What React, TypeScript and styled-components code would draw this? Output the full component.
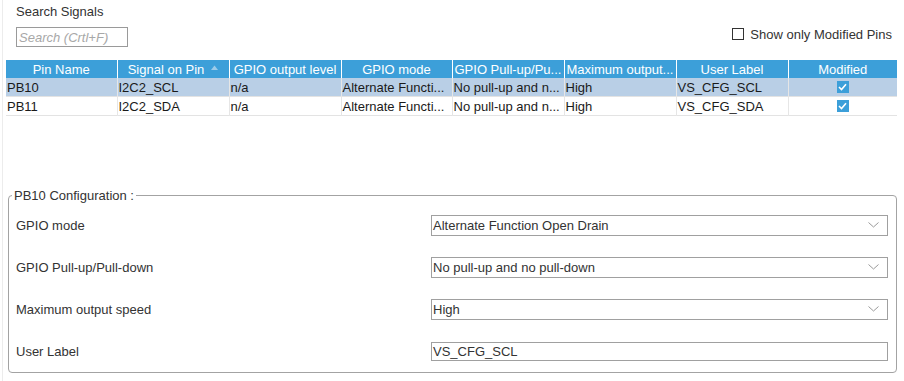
import React, { FunctionComponent } from "react";
import styled, { createGlobalStyle } from "styled-components";

// DATA //
const columns = [
    { title: "Pin Name", width: 111, align: "center" },
    { title: "Signal on Pin", width: 112, align: "center", sort: true },
    { title: "GPIO output level", width: 112, align: "center" },
    { title: "GPIO mode", width: 111, align: "center" },
    { title: "GPIO Pull-up/Pu...", width: 112, align: "left" },
    { title: "Maximum output...", width: 112, align: "left" },
    { title: "User Label", width: 112, align: "center" },
    { title: "Modified", width: 109, align: "center" },
];

const pins = [
    { pin: "PB10", signal: "I2C2_SCL", level: "n/a", mode: "Alternate Functi...", pull: "No pull-up and n...", speed: "High", label: "VS_CFG_SCL", selected: true },
    { pin: "PB11", signal: "I2C2_SDA", level: "n/a", mode: "Alternate Functi...", pull: "No pull-up and n...", speed: "High", label: "VS_CFG_SDA", selected: false },
];

const config = [
    { label: "GPIO mode", value: "Alternate Function Open Drain", select: true },
    { label: "GPIO Pull-up/Pull-down", value: "No pull-up and no pull-down", select: true },
    { label: "Maximum output speed", value: "High", select: true },
    { label: "User Label", value: "VS_CFG_SCL", select: false },
];

// ICONS //
const Chevron = () => (
    <svg width="11" height="6" viewBox="0 0 11 6">
        <path d="M0.5 0.5 L5.5 5 L10.5 0.5" fill="none" stroke="#9a9a9a" strokeWidth="1" />
    </svg>
);

const Tick = () => (
    <svg width="9" height="8" viewBox="0 0 9 8">
        <path d="M1 4 L3.5 6.5 L8 1.2" fill="none" stroke="#fff" strokeWidth="1.6" />
    </svg>
);

const SortUp = () => (
    <svg width="7" height="5" viewBox="0 0 7 5">
        <path d="M0 5 L3.5 0.5 L7 5 Z" fill="#9ccbe9" />
    </svg>
);

const App: FunctionComponent = () => {
    return (
        <Page>
            <GlobalStyle />
            <TopBar>
                <SearchGroup>
                    <Title>Search Signals</Title>
                    <SearchInput placeholder="Search (Crtl+F)" />
                </SearchGroup>
                <FilterToggle>
                    <PlainBox />
                    Show only Modified Pins
                </FilterToggle>
            </TopBar>

            <PinTable>
                <colgroup>
                    {columns.map((c) => (
                        <col key={c.title} style={{ width: c.width }} />
                    ))}
                </colgroup>
                <thead>
                    <tr>
                        {columns.map((c) => (
                            <HeadCell key={c.title} $align={c.align}>
                                {c.title}
                                {c.sort && (
                                    <SortMark>
                                        <SortUp />
                                    </SortMark>
                                )}
                            </HeadCell>
                        ))}
                    </tr>
                </thead>
                <tbody>
                    {pins.map((p) => (
                        <BodyRow key={p.pin} $selected={p.selected}>
                            <Cell>{p.pin}</Cell>
                            <Cell>{p.signal}</Cell>
                            <Cell>{p.level}</Cell>
                            <Cell>{p.mode}</Cell>
                            <Cell>{p.pull}</Cell>
                            <Cell>{p.speed}</Cell>
                            <Cell>{p.label}</Cell>
                            <CheckCell>
                                <BlueBox>
                                    <Tick />
                                </BlueBox>
                            </CheckCell>
                        </BodyRow>
                    ))}
                </tbody>
            </PinTable>

            <ConfigBox>
                <Legend>PB10 Configuration :</Legend>
                {config.map((c) => (
                    <ConfigRow key={c.label}>
                        <ConfigLabel>{c.label}</ConfigLabel>
                        {c.select ? (
                            <SelectBox>
                                <span>{c.value}</span>
                                <Chevron />
                            </SelectBox>
                        ) : (
                            <TextBox>{c.value}</TextBox>
                        )}
                    </ConfigRow>
                ))}
            </ConfigBox>
        </Page>
    );
};

// STYLED COMPONENTS //
const GlobalStyle = createGlobalStyle`
    html, body {
        margin: 0;
        padding: 0;
        background: #ffffff;
    }
    body {
        font-family: "Liberation Sans", Arial, sans-serif;
        font-size: 13px;
        color: #333333;
    }
`;

const Page = styled.div`
    width: 902px;
    height: 381px;
    box-sizing: border-box;
    margin-left: 2px;
    padding: 0 0 0 3px;
    border-left: 1px solid #ececec;
`;

const TopBar = styled.div`
    width: 891px;
    height: 60px;
    display: flex;
    justify-content: space-between;
    align-items: flex-start;
`;

const SearchGroup = styled.div`
    display: flex;
    flex-direction: column;
    padding: 4px 0 0 10px;
`;

const Title = styled.div`
    height: 15px;
    line-height: 15px;
    color: #333;
`;

const SearchInput = styled.input`
    margin-top: 8px;
    width: 112px;
    height: 20px;
    box-sizing: border-box;
    border: 1px solid #9a9a9a;
    padding: 0 2px;
    font-family: "Liberation Sans", Arial, sans-serif;
    font-size: 13px;
    outline: none;
    &::placeholder {
        color: #a8a8a8;
        font-style: italic;
    }
`;

const FilterToggle = styled.label`
    display: flex;
    align-items: center;
    gap: 6px;
    margin-top: 27px;
    margin-right: 5px;
    height: 14px;
    color: #333;
`;

const PlainBox = styled.span`
    width: 12px;
    height: 12px;
    box-sizing: border-box;
    border: 1px solid #333;
    background: #fff;
`;

const PinTable = styled.table`
    width: 891px;
    table-layout: fixed;
    border-collapse: collapse;
`;

const HeadCell = styled.th<{ $align: string }>`
    height: 18px;
    padding: 0 2px;
    background: #3c9fd9;
    color: #ffffff;
    font-weight: normal;
    line-height: 15px;
    text-align: ${(p) => p.$align};
    white-space: nowrap;
    overflow: hidden;
    border-left: 1px solid #ffffff;
    &:first-child {
        border-left: none;
    }
`;

const SortMark = styled.span`
    display: inline-block;
    margin-left: 7px;
    line-height: 0;
    vertical-align: 4px;
`;

const BodyRow = styled.tr<{ $selected: boolean }>`
    background: ${(p) => (p.$selected ? "#b9cfe6" : "#ffffff")};
    border-bottom: 1px solid #e3e3e3;
`;

const Cell = styled.td`
    height: 18px;
    padding: 0 1px;
    line-height: 15px;
    color: #1a1a1a;
    white-space: nowrap;
    overflow: hidden;
    border-left: 1px solid #e6e6e6;
    &:first-child {
        border-left: none;
    }
`;

const CheckCell = styled(Cell)`
    text-align: center;
    line-height: 0;
`;

const BlueBox = styled.span`
    display: inline-flex;
    align-items: center;
    justify-content: center;
    width: 12px;
    height: 12px;
    background: #3c9fd9;
`;

const ConfigBox = styled.fieldset`
    margin: 72px 0 0 2px;
    padding: 1px 8px 0 7px;
    width: 889px;
    box-sizing: border-box;
    border: 1px solid #a3a3a3;
    border-radius: 4px;
`;

const Legend = styled.legend`
    margin-left: -4px;
    padding: 0 2px;
    height: 15px;
    line-height: 15px;
    color: #333;
`;

const ConfigRow = styled.div`
    height: 42px;
    display: grid;
    grid-template-columns: 415px 1fr;
    align-items: center;
`;

const ConfigLabel = styled.div`
    color: #333;
`;

const SelectBox = styled.div`
    height: 21px;
    box-sizing: border-box;
    border: 1px solid #a0a0a0;
    display: flex;
    align-items: center;
    justify-content: space-between;
    padding: 0 8px 0 1px;
    color: #333;
`;

const TextBox = styled.div`
    height: 19px;
    line-height: 17px;
    box-sizing: border-box;
    border: 1px solid #a0a0a0;
    padding: 0 1px;
    color: #333;
`;

export default App;
